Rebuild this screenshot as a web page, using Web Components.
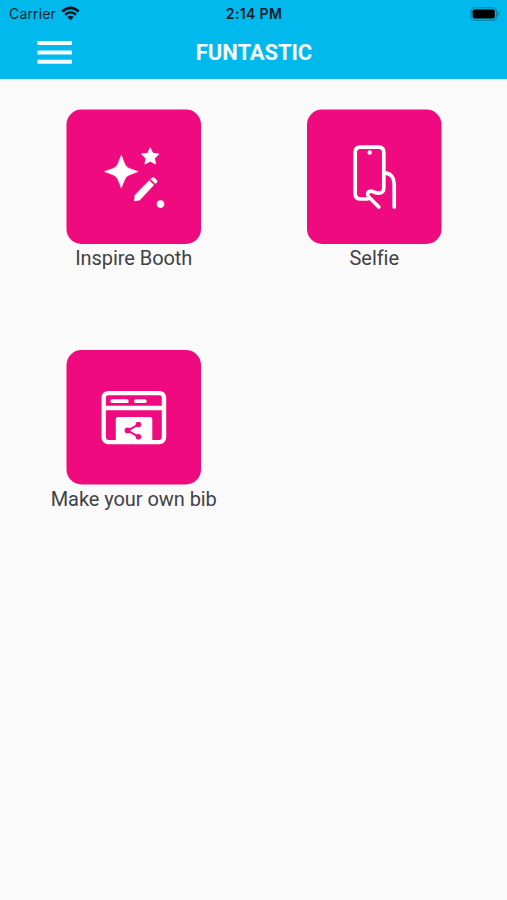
<!DOCTYPE html>
<html lang="en">
<head>
<meta charset="utf-8">
<title>Funtastic</title>
<style>
html,body{margin:0;background:#fafafa}
</style>
</head>
<body>
<fun-app></fun-app>
<script>
const define = (name, html) => customElements.define(name, class extends HTMLElement {
  constructor() {
    super();
    this.attachShadow({mode: 'open'}).innerHTML = html;
  }
});

define('status-bar', `
<style>
:host{display:grid;grid-template-columns:1fr auto 1fr;align-items:center;height:27px;padding:0 7px 0 9px;box-sizing:border-box;font:400 14px/27px Inter,"Liberation Sans",sans-serif;color:#06242e}
.left{display:flex;align-items:center;gap:5px;letter-spacing:.15px}
.time{font-weight:600;font-size:14px;letter-spacing:.35px;color:#03202a;padding-right:1px}
.battery{justify-self:end}
svg{display:block}
</style>
<div class="left"><span>Carrier</span>
<svg width="19" height="15" viewBox="0 0 19 15" fill="none" stroke="#04141a" stroke-width="2.6"><path d="M1.3 5.6Q9.5-2 17.7 5.6M4.1 8.7Q9.5 3.8 14.9 8.7"/><path d="M6.3 11Q9.5 8.3 12.7 11L9.5 14.2Z" fill="#04141a" stroke="none"/></svg></div>
<span class="time">2:14 PM</span>
<svg class="battery" width="30" height="14" viewBox="0 0 30 14"><rect x="1" y=".8" width="25.4" height="12.4" rx="3.4" fill="none" stroke="#087e9e" stroke-width="1.1"/><rect x="2.6" y="2.4" width="22.2" height="9.2" rx="1.8" fill="#000"/><path d="M27.6 4.8q1.8.6 1.8 2.2t-1.8 2.2z" fill="#087e9e"/></svg>`);

define('app-bar', `
<style>
:host{display:grid;grid-template-columns:1fr auto 1fr;align-items:center;height:52px;padding:0 36px 0 37px;box-sizing:border-box;color:#f5fdff;font:700 22px/50px Roboto,sans-serif;letter-spacing:-.08px}
svg{display:block}
</style>
<svg width="35" height="24" viewBox="0 0 35 24" fill="#f5fdff"><path d="M.5 0h34.5v4H.5zM.5 9.5h34.5v4H.5zM.5 18.8h34.5v4H.5z"/></svg>
<slot></slot>`);

define('menu-tile', `
<style>
:host{display:flex;flex-direction:column;align-items:center;font:400 20px/29px Roboto,sans-serif;letter-spacing:-.06px;color:#424244;white-space:nowrap}
.tile{width:134.5px;height:134.5px}
::slotted([slot=icon]){display:block}
</style>
<div class="tile"><slot name="icon"></slot></div>
<slot></slot>`);

// Each icon is drawn in page coordinates; x and y are the origin of its canvas,
// left and top the corner of its rounded tile.
const icon = (name, x, y, left, top, body) => define(name, `
<style>:host,svg{display:block}svg{overflow:visible}</style>
<svg width="134" height="134" viewBox="${x} ${y} 134 134"><rect x="${left}" y="${top}" width="134.5" height="134.5" rx="15" fill="#f00a80"/>${body}</svg>`);

icon('wand-icon', 67, 110, 66.5, 109.5, `
<g fill="#fff">
<path d="M121.3 155.2L124.6 163.6Q125.8 167.2 129.4 168.4L138.1 171.6L129.4 174.9Q125.8 176.1 124.6 179.7L121.3 188.1L118 179.7Q116.8 176.1 113.2 174.9L104.5 171.6L113.2 168.4Q116.8 167.2 118 163.6Z" stroke="#fff" stroke-width=".5" stroke-linejoin="round"/>
<path d="M150.2 148.2l2.5 5.2 5.8.7-4.2 4 1.1 5.7-5.2-2.8-5.1 2.8 1-5.7-4.2-4 5.8-.7z" stroke="#fff" stroke-width="1.2" stroke-linejoin="round"/>
<path d="M149.2 180.4l4.6 4.6-14.2 15.2-5.2.8.4-5.8zM150.5 179.1l1.6-1.2q1.2-.8 2.4.2l2.1 2q1 1.1.2 2.3l-1.4 1.4z" stroke="#fff" stroke-width=".4"/>
<circle cx="160.5" cy="204.1" r="3.8"/></g>`);

icon('phone-hand-icon', 307, 110, 307, 109.5, `
<g fill="none" stroke="#fff" stroke-width="3.7" stroke-linecap="round" stroke-linejoin="round">
<path d="M367.3 199H360.6Q355.2 199 355.2 193.7V152.3Q355.2 147.2 360.6 147.2H378.4Q383.8 147.2 383.8 152.3V188Q383.8 193.2 378.5 193.2Q376 193.2 373.6 191.9C370.5 190.3 367.5 191.4 367.8 194.4Q368 196 369.8 198L378.8 207"/>
<path d="M385.2 173.2C391.5 173.3 394.2 178.5 394.2 184.5V207"/></g><circle cx="369.7" cy="152.5" r="2.2" fill="#fff"/>`);

icon('share-window-icon', 67, 350, 66.5, 350, `
<rect x="103.7" y="393.1" width="60.3" height="49" rx="4.5" fill="none" stroke="#fff" stroke-width="4.4"/>
<path d="M104 408h60" stroke="#fff" stroke-width="4.4"/>
<path d="M112.3 401.2H126.8M136 401.2H144.8" stroke="#fff" stroke-width="3.8" stroke-linecap="round"/>
<path d="M115.8 442V419.3q0-2.2 2.2-2.2h32.1q2.2 0 2.2 2.2V442z" fill="#fff"/>
<path d="M138.5 424.6L127.5 430.6L138.5 436.6" fill="none" stroke="#f00a80" stroke-width="2"/>
<g fill="#f00a80"><circle cx="138.4" cy="424.5" r="2.8"/><circle cx="127.6" cy="430.6" r="3"/><circle cx="138.4" cy="436.7" r="2.8"/></g>`);

define('fun-app', `
<style>
:host{display:block;height:900px;background:#fafafa}
header{background:#02b9ed}
main{display:grid;grid-template-columns:240.5px 240.5px;grid-auto-rows:240.5px;padding:30.5px 0 0 13.5px}
</style>
<header><status-bar></status-bar><app-bar>FUNTASTIC</app-bar></header>
<main>
<menu-tile><wand-icon slot="icon"></wand-icon>Inspire Booth</menu-tile>
<menu-tile><phone-hand-icon slot="icon"></phone-hand-icon>Selfie</menu-tile>
<menu-tile><share-window-icon slot="icon"></share-window-icon>Make your own bib</menu-tile>
</main>`);
</script>
</body>
</html>
